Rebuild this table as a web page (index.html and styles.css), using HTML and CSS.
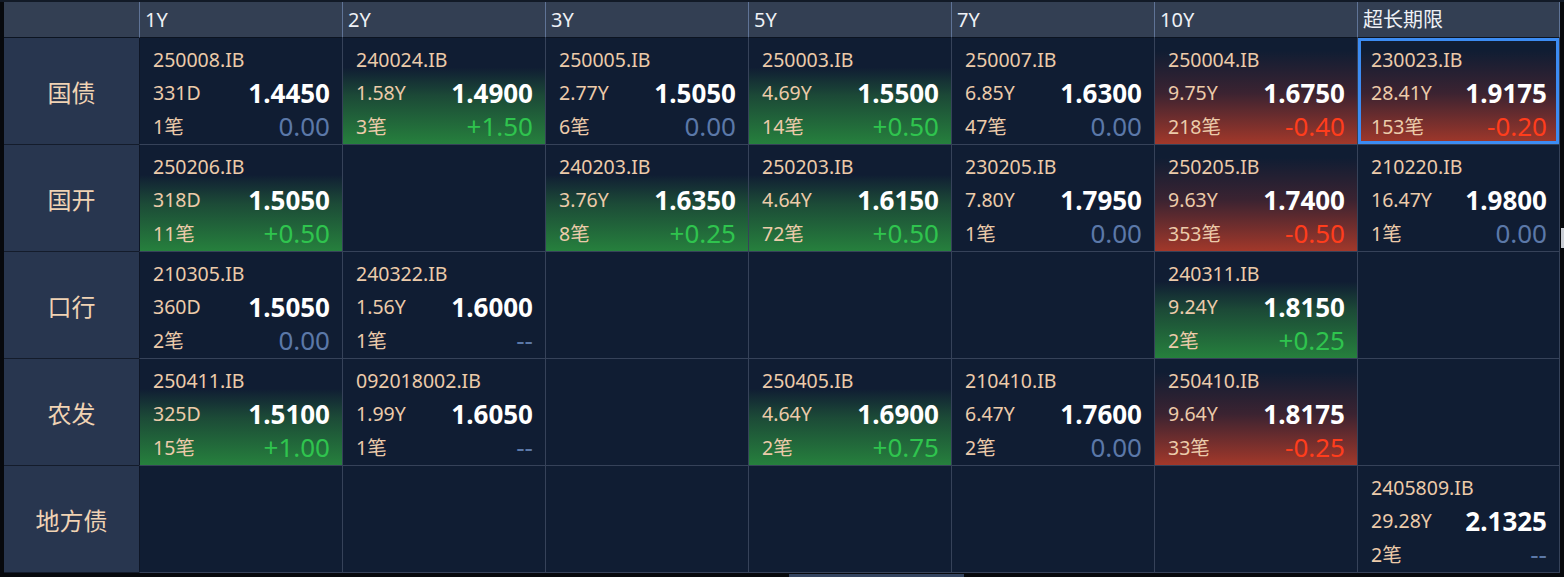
FILE: index.html
```html
<!DOCTYPE html>
<html lang="zh-CN">
<head>
<meta charset="utf-8">
<title>利率债报价矩阵</title>
<link rel="stylesheet" href="styles.css">
</head>
<body>
<div class="board">
  <div class="hd corner"></div>
  <div class="hd">1Y</div>
  <div class="hd">2Y</div>
  <div class="hd">3Y</div>
  <div class="hd">5Y</div>
  <div class="hd">7Y</div>
  <div class="hd">10Y</div>
  <div class="hd">超长期限</div>

  <div class="lbl">国债</div>
  <div class="cell"><div class="ln"><span class="code">250008.IB</span></div><div class="ln"><span class="tenor">331D</span><span class="px">1.4450</span></div><div class="ln"><span class="cnt">1笔</span><span class="chg flat">0.00</span></div></div>
  <div class="cell up"><div class="ln"><span class="code">240024.IB</span></div><div class="ln"><span class="tenor">1.58Y</span><span class="px">1.4900</span></div><div class="ln"><span class="cnt">3笔</span><span class="chg pos">+1.50</span></div></div>
  <div class="cell"><div class="ln"><span class="code">250005.IB</span></div><div class="ln"><span class="tenor">2.77Y</span><span class="px">1.5050</span></div><div class="ln"><span class="cnt">6笔</span><span class="chg flat">0.00</span></div></div>
  <div class="cell up"><div class="ln"><span class="code">250003.IB</span></div><div class="ln"><span class="tenor">4.69Y</span><span class="px">1.5500</span></div><div class="ln"><span class="cnt">14笔</span><span class="chg pos">+0.50</span></div></div>
  <div class="cell"><div class="ln"><span class="code">250007.IB</span></div><div class="ln"><span class="tenor">6.85Y</span><span class="px">1.6300</span></div><div class="ln"><span class="cnt">47笔</span><span class="chg flat">0.00</span></div></div>
  <div class="cell down"><div class="ln"><span class="code">250004.IB</span></div><div class="ln"><span class="tenor">9.75Y</span><span class="px">1.6750</span></div><div class="ln"><span class="cnt">218笔</span><span class="chg neg">-0.40</span></div></div>
  <div class="cell down selected"><div class="ln"><span class="code">230023.IB</span></div><div class="ln"><span class="tenor">28.41Y</span><span class="px">1.9175</span></div><div class="ln"><span class="cnt">153笔</span><span class="chg neg">-0.20</span></div></div>

  <div class="lbl">国开</div>
  <div class="cell up"><div class="ln"><span class="code">250206.IB</span></div><div class="ln"><span class="tenor">318D</span><span class="px">1.5050</span></div><div class="ln"><span class="cnt">11笔</span><span class="chg pos">+0.50</span></div></div>
  <div class="cell"></div>
  <div class="cell up"><div class="ln"><span class="code">240203.IB</span></div><div class="ln"><span class="tenor">3.76Y</span><span class="px">1.6350</span></div><div class="ln"><span class="cnt">8笔</span><span class="chg pos">+0.25</span></div></div>
  <div class="cell up"><div class="ln"><span class="code">250203.IB</span></div><div class="ln"><span class="tenor">4.64Y</span><span class="px">1.6150</span></div><div class="ln"><span class="cnt">72笔</span><span class="chg pos">+0.50</span></div></div>
  <div class="cell"><div class="ln"><span class="code">230205.IB</span></div><div class="ln"><span class="tenor">7.80Y</span><span class="px">1.7950</span></div><div class="ln"><span class="cnt">1笔</span><span class="chg flat">0.00</span></div></div>
  <div class="cell down"><div class="ln"><span class="code">250205.IB</span></div><div class="ln"><span class="tenor">9.63Y</span><span class="px">1.7400</span></div><div class="ln"><span class="cnt">353笔</span><span class="chg neg">-0.50</span></div></div>
  <div class="cell"><div class="ln"><span class="code">210220.IB</span></div><div class="ln"><span class="tenor">16.47Y</span><span class="px">1.9800</span></div><div class="ln"><span class="cnt">1笔</span><span class="chg flat">0.00</span></div></div>

  <div class="lbl">口行</div>
  <div class="cell"><div class="ln"><span class="code">210305.IB</span></div><div class="ln"><span class="tenor">360D</span><span class="px">1.5050</span></div><div class="ln"><span class="cnt">2笔</span><span class="chg flat">0.00</span></div></div>
  <div class="cell"><div class="ln"><span class="code">240322.IB</span></div><div class="ln"><span class="tenor">1.56Y</span><span class="px">1.6000</span></div><div class="ln"><span class="cnt">1笔</span><span class="chg flat">--</span></div></div>
  <div class="cell"></div>
  <div class="cell"></div>
  <div class="cell"></div>
  <div class="cell up"><div class="ln"><span class="code">240311.IB</span></div><div class="ln"><span class="tenor">9.24Y</span><span class="px">1.8150</span></div><div class="ln"><span class="cnt">2笔</span><span class="chg pos">+0.25</span></div></div>
  <div class="cell"></div>

  <div class="lbl">农发</div>
  <div class="cell up"><div class="ln"><span class="code">250411.IB</span></div><div class="ln"><span class="tenor">325D</span><span class="px">1.5100</span></div><div class="ln"><span class="cnt">15笔</span><span class="chg pos">+1.00</span></div></div>
  <div class="cell"><div class="ln"><span class="code">092018002.IB</span></div><div class="ln"><span class="tenor">1.99Y</span><span class="px">1.6050</span></div><div class="ln"><span class="cnt">1笔</span><span class="chg flat">--</span></div></div>
  <div class="cell"></div>
  <div class="cell up"><div class="ln"><span class="code">250405.IB</span></div><div class="ln"><span class="tenor">4.64Y</span><span class="px">1.6900</span></div><div class="ln"><span class="cnt">2笔</span><span class="chg pos">+0.75</span></div></div>
  <div class="cell"><div class="ln"><span class="code">210410.IB</span></div><div class="ln"><span class="tenor">6.47Y</span><span class="px">1.7600</span></div><div class="ln"><span class="cnt">2笔</span><span class="chg flat">0.00</span></div></div>
  <div class="cell down"><div class="ln"><span class="code">250410.IB</span></div><div class="ln"><span class="tenor">9.64Y</span><span class="px">1.8175</span></div><div class="ln"><span class="cnt">33笔</span><span class="chg neg">-0.25</span></div></div>
  <div class="cell"></div>

  <div class="lbl">地方债</div>
  <div class="cell"></div>
  <div class="cell"></div>
  <div class="cell"></div>
  <div class="cell"></div>
  <div class="cell"></div>
  <div class="cell"></div>
  <div class="cell"><div class="ln"><span class="code">2405809.IB</span></div><div class="ln"><span class="tenor">29.28Y</span><span class="px">2.1325</span></div><div class="ln"><span class="cnt">2笔</span><span class="chg flat">--</span></div></div>
</div>
<div class="vthumb"></div>
<div class="hthumb"></div>
</body>
</html>
```

FILE: styles.css
```css
html, body {
  margin: 0;
  padding: 0;
  background: #07090d;
  height: 577px;
  overflow: hidden;
}

body {
  position: relative;
  font-family: "Noto Sans", "Noto Sans CJK SC", sans-serif;
  border-top: 2px solid #121a27;
  box-sizing: border-box;
}

.board {
  margin-left: 4px;
  width: 1556px;
  display: grid;
  grid-template-columns: 135px repeat(7, 1fr);
  grid-template-rows: 36px repeat(5, 107px);
}

.hd {
  background: #333f53;
  color: #eef1f6;
  font-size: 20px;
  line-height: 35px;
  padding-left: 5px;
  border-left: 1px solid #5f7396;
  border-bottom: 1px solid #0c1421;
  white-space: nowrap;
}

.hd.corner {
  border-left: none;
}

.hd:nth-child(8) {
  border-right: 1px solid #5f7396;
}

.lbl {
  background: #28364f;
  color: #f0d3b4;
  font-size: 24px;
  display: flex;
  align-items: center;
  justify-content: center;
  border-bottom: 1px solid #141c2b;
}

.cell {
  background: #101d33;
  border-left: 1px solid #364259;
  border-bottom: 1px solid #364259;
  padding: 5px 12px 0 13px;
  box-sizing: border-box;
}

.lbl + .cell {
  border-left-color: #0e1626;
}

.cell:nth-child(8n) {
  border-right: 1px solid #364259;
}

.cell.up {
  background: linear-gradient(180deg, #101d33 28%, #1c4a37 55%, #26803d 100%);
}

.cell.down {
  background: linear-gradient(180deg, #101d33 12%, #3b2331 52%, #a2382a 100%);
}

.cell.selected {
  box-shadow: inset 0 0 0 3px #3c8cf3;
}

.ln {
  height: 33px;
  display: flex;
  align-items: center;
  justify-content: space-between;
  white-space: nowrap;
}

.code,
.tenor,
.cnt {
  color: #eccbaa;
  font-size: 19.5px;
}

.px {
  color: #ffffff;
  font-size: 26px;
  font-weight: 700;
}

.chg {
  font-size: 26px;
}

.chg.flat {
  color: #5b78a8;
}

.chg.pos {
  color: #2fc44e;
}

.chg.neg {
  color: #ff3d1c;
}

.vthumb {
  position: absolute;
  left: 1561px;
  top: 226px;
  width: 3px;
  height: 20px;
  background: #c9cdd4;
}

.hthumb {
  position: absolute;
  left: 789px;
  top: 572px;
  width: 175px;
  height: 5px;
  background: #344460;
}
```
